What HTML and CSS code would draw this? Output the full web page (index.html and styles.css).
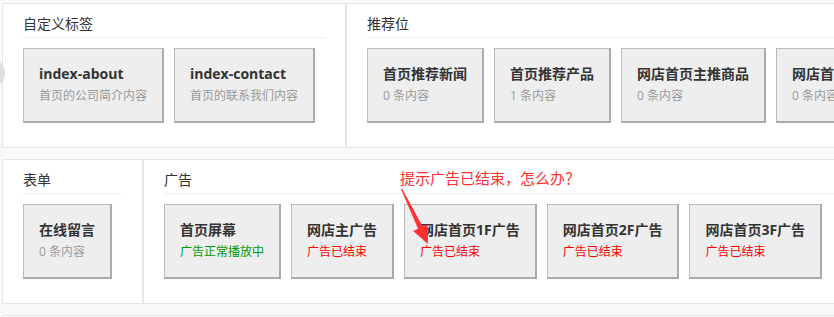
FILE: index.html
```html
<!DOCTYPE html>
<html lang="zh-cn">
<head>
    <meta charset="UTF-8">
    <meta name="viewport" content="width=device-width, initial-scale=1.0">
    <title>模块管理</title>
    <link rel="stylesheet" href="styles.css">
</head>
<body>

<div class="wrap">
    <div class="row">
        <div class="panel panel-tags">
            <h3>自定义标签</h3>
            <div class="cards">
                <a class="card"><b>index-about</b><span>首页的公司简介内容</span></a>
                <a class="card"><b>index-contact</b><span>首页的联系我们内容</span></a>
            </div>
        </div>
        <div class="panel panel-wide">
            <h3>推荐位</h3>
            <div class="cards">
                <a class="card"><b>首页推荐新闻</b><span>0 条内容</span></a>
                <a class="card"><b>首页推荐产品</b><span>1 条内容</span></a>
                <a class="card"><b>网店首页主推商品</b><span>0 条内容</span></a>
                <a class="card"><b>网店首页新品</b><span>0 条内容</span></a>
            </div>
        </div>
    </div>

    <div class="row">
        <div class="panel panel-form">
            <h3>表单</h3>
            <div class="cards">
                <a class="card"><b>在线留言</b><span>0 条内容</span></a>
            </div>
        </div>
        <div class="panel panel-wide">
            <h3>广告</h3>
            <div class="cards">
                <a class="card"><b>首页屏幕</b><span class="on">广告正常播放中</span></a>
                <a class="card"><b>网店主广告</b><span class="off">广告已结束</span></a>
                <a class="card"><b>网店首页1F广告</b><span class="off">广告已结束</span></a>
                <a class="card"><b>网店首页2F广告</b><span class="off">广告已结束</span></a>
                <a class="card"><b>网店首页3F广告</b><span class="off">广告已结束</span></a>
            </div>
        </div>
    </div>

    <div class="row">
        <div class="panel panel-empty"></div>
    </div>
</div>

<!-- annotation drawn on the screenshot -->
<div class="prev-btn"></div>
<p class="note">提示广告已结束，怎么办？</p>
<svg class="note-arrow" width="834" height="317" viewBox="0 0 834 317">
    <polygon fill="#ff3030" points="401,189 402,188.6 422.6,226.6 427.5,224.3 428,244 413.1,231.1 418,228.8"/>
</svg>

</body>
</html>
```

FILE: styles.css
```css
body {
    margin: 0;
    background: #f9f9f9;
    font-family: "Open Sans", "Noto Sans CJK SC", sans-serif;
    color: #333;
    overflow: hidden;
    position: relative;
    width: 834px;
    height: 317px;
}
.wrap {
    padding: 3px 0 0 2px;
    display: flex;
    flex-direction: column;
    gap: 11px;
}
.row {
    display: flex;
}
.panel {
    background: #fff;
    border: 1px solid #e5e5e5;
    padding: 10px 20px 24px 20px;
    flex: none;
}
.panel + .panel {
    border-left-color: #e8e8e8;
}
.panel-tags {
    width: 302px;
}
.panel-form {
    width: 99px;
}
.panel-wide {
    width: 900px;
}
.panel-empty {
    width: 1000px;
    height: 60px;
}
.panel h3 {
    margin: 0 0 10px 0;
    font-size: 14px;
    font-weight: normal;
    line-height: 20px;
    padding-bottom: 3px;
    border-bottom: 1px solid #eee;
    color: #333;
}
.cards {
    display: flex;
    gap: 10px;
}
.card {
    display: flex;
    flex-direction: column;
    gap: 2px;
    background: #eee;
    border: 1px solid #bbb;
    border-right: 2px solid #aaa;
    border-bottom: 2px solid #aaa;
    padding: 15px 15px;
    white-space: nowrap;
}
.card b {
    font-size: 14px;
    line-height: 20px;
    color: #333;
}
.card span {
    font-size: 12px;
    line-height: 20px;
    color: #999;
}
.card span.on {
    color: #090;
}
.card span.off {
    color: #f00;
}
.prev-btn {
    position: absolute;
    left: -25px;
    top: 58px;
    width: 30px;
    height: 30px;
    border-radius: 50%;
    background: #dedede;
}
.note {
    position: absolute;
    left: 400px;
    top: 168px;
    margin: 0;
    font-size: 15px;
    line-height: 20px;
    color: #ff3030;
}
.note-arrow {
    position: absolute;
    left: 0;
    top: 0;
}
```
